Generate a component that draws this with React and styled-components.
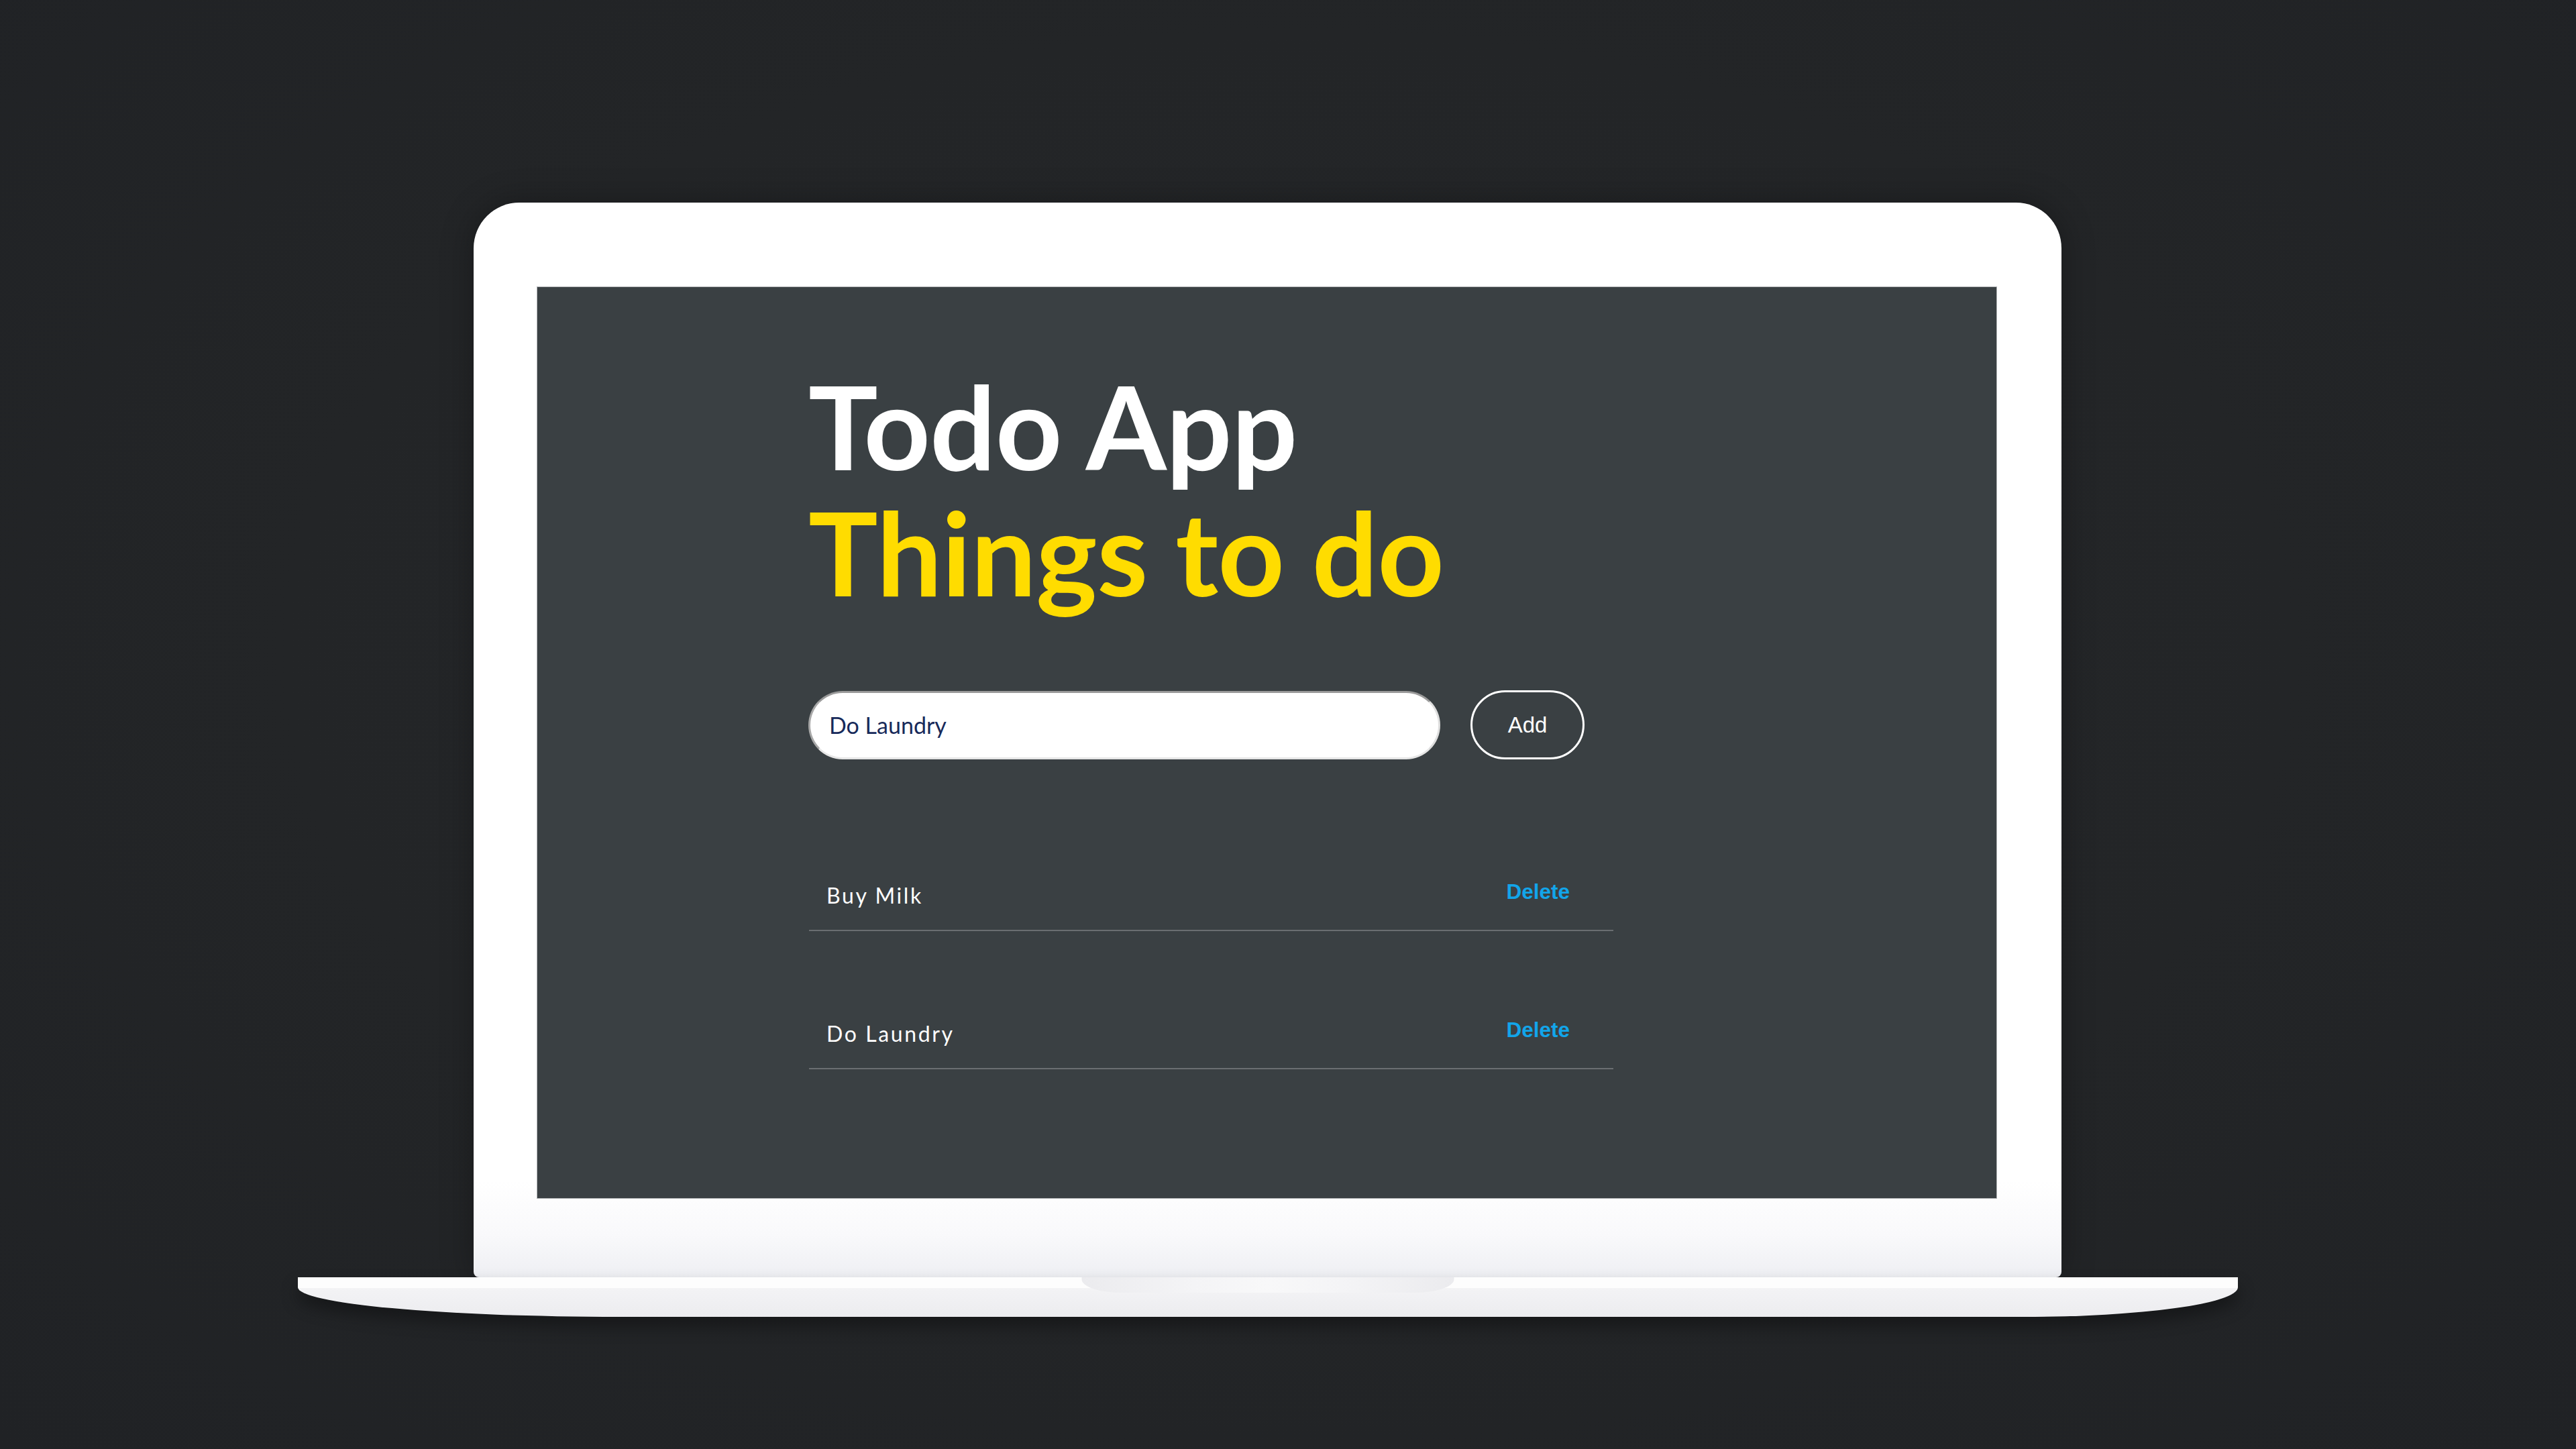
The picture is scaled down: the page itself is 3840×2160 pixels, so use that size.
import React, { useState } from "react";
import styled, { createGlobalStyle } from "styled-components";

const GlobalStyle = createGlobalStyle`
  html, body {
    margin: 0;
    padding: 0;
    background: #232527;
  }
  * {
    box-sizing: border-box;
  }
`;

export default function App() {
  const [text, setText] = useState("Do Laundry");
  const [todos, setTodos] = useState([
    { id: 1, title: "Buy Milk" },
    { id: 2, title: "Do Laundry" },
  ]);

  const onAdd = (e) => {
    e.preventDefault();
    if (!text.trim()) return;
    setTodos([...todos, { id: Date.now(), title: text.trim() }]);
    setText("");
  };

  const onDelete = (id) => {
    setTodos(todos.filter((t) => t.id !== id));
  };

  return (
    <>
      <GlobalStyle />
      <Stage>
        <Laptop>
          <Lid>
            <Screen>
              <Content>
                <Title>
                  Todo App
                  <Subtitle>Things to do</Subtitle>
                </Title>

                {/* FORMULARIO */}
                <AddForm onSubmit={onAdd}>
                  <TodoInput
                    value={text}
                    onChange={(e) => setText(e.target.value)}
                  />
                  <AddButton type="submit">Add</AddButton>
                </AddForm>

                <TodoList>
                  {todos.map((todo) => (
                    <TodoRow key={todo.id}>
                      <TodoLabel>{todo.title}</TodoLabel>
                      <DeleteButton onClick={() => onDelete(todo.id)}>
                        Delete
                      </DeleteButton>
                    </TodoRow>
                  ))}
                </TodoList>
              </Content>
            </Screen>
          </Lid>
          <Base>
            <Notch />
          </Base>
        </Laptop>
      </Stage>
    </>
  );
}

const Stage = styled.main`
  width: 3840px;
  height: 2160px;
  display: flex;
  justify-content: center;
  padding: 302px 61px 0 0;
  background: radial-gradient(
    ellipse at 50% 45%,
    #25272a 0%,
    #232527 55%,
    #202225 100%
  );
  overflow: hidden;
`;

const Laptop = styled.div`
  display: flex;
  flex-direction: column;
  align-items: center;
`;

const Lid = styled.div`
  width: 2367px;
  height: 1602px;
  padding: 125px 96px 0 94px;
  border-radius: 68px 68px 8px 8px;
  background: linear-gradient(
    180deg,
    #ffffff 0%,
    #ffffff 91%,
    #f9f9fb 96%,
    #eeeff3 100%
  );
  box-shadow: 0 0 50px rgba(0, 0, 0, 0.3);
`;

const Screen = styled.div`
  width: 2177px;
  height: 1360px;
  background: #3a4043;
  border: 1px solid #b4b6b8;
`;

const Content = styled.div`
  display: flex;
  flex-direction: column;
  align-items: flex-start;
  padding: 112px 0 0 404px;
`;

const Title = styled.h1`
  margin: 0;
  font-family: Lato, "Open Sans", sans-serif;
  font-weight: 700;
  font-size: 173px;
  line-height: 188px;
  color: #ffffff;
  letter-spacing: -0.5px;
`;

const Subtitle = styled.span`
  display: block;
  color: #ffdc00;
`;

const AddForm = styled.form`
  display: flex;
  align-items: center;
  gap: 45px;
  margin-top: 113px;
`;

const TodoInput = styled.input`
  width: 942px;
  height: 102px;
  padding: 0 28px;
  border-radius: 51px;
  border-width: 3px;
  border-style: solid;
  border-color: #9a9a9a #dedede #e6e6e6 #a8a8a8;
  background: #ffffff;
  font-family: Lato, "Open Sans", sans-serif;
  font-size: 34px;
  color: #182a5a;
  outline: none;
`;

const AddButton = styled.button`
  width: 170px;
  height: 103px;
  border: 3px solid #ffffff;
  border-radius: 52px;
  background: transparent;
  color: #ffffff;
  font-family: "Liberation Sans", Arial, sans-serif;
  font-size: 33px;
  cursor: pointer;
`;

const TodoList = styled.ul`
  list-style: none;
  margin: 50px 0 0 1px;
  padding: 0;
  width: 1199px;
`;

const TodoRow = styled.li`
  display: flex;
  justify-content: space-between;
  align-items: flex-end;
  height: 206px;
  padding: 0 65px 32px 26px;
  border-bottom: 2px solid #6a6e71;
`;

const TodoLabel = styled.span`
  font-family: Lato, "Open Sans", sans-serif;
  font-size: 32px;
  line-height: 1.2;
  letter-spacing: 2.6px;
  color: #ffffff;
`;

const DeleteButton = styled.button`
  margin: 0 0 6px;
  padding: 0;
  border: none;
  background: none;
  font-family: "Liberation Sans", Arial, sans-serif;
  font-weight: 700;
  font-size: 31.5px;
  color: #12a5ea;
  cursor: pointer;
`;

const Base = styled.div`
  position: relative;
  width: 2892px;
  height: 59px;
  border-radius: 0 0 320px 480px / 0 0 44px 44px;
  background: linear-gradient(
    180deg,
    #fdfdfd 0%,
    #fdfdfd 27%,
    #f3f3f5 28%,
    #ececef 100%
  );
  box-shadow: 0 14px 24px rgba(0, 0, 0, 0.35);
`;

const Notch = styled.div`
  position: absolute;
  top: 0;
  left: 50%;
  transform: translateX(-50%);
  width: 555px;
  height: 23px;
  border-radius: 0 0 60px 60px / 0 0 20px 20px;
  background: linear-gradient(
    90deg,
    #ebebee 0%,
    #f4f4f6 30%,
    #f8f8f9 50%,
    #f4f4f6 70%,
    #ebebee 100%
  );
`;
